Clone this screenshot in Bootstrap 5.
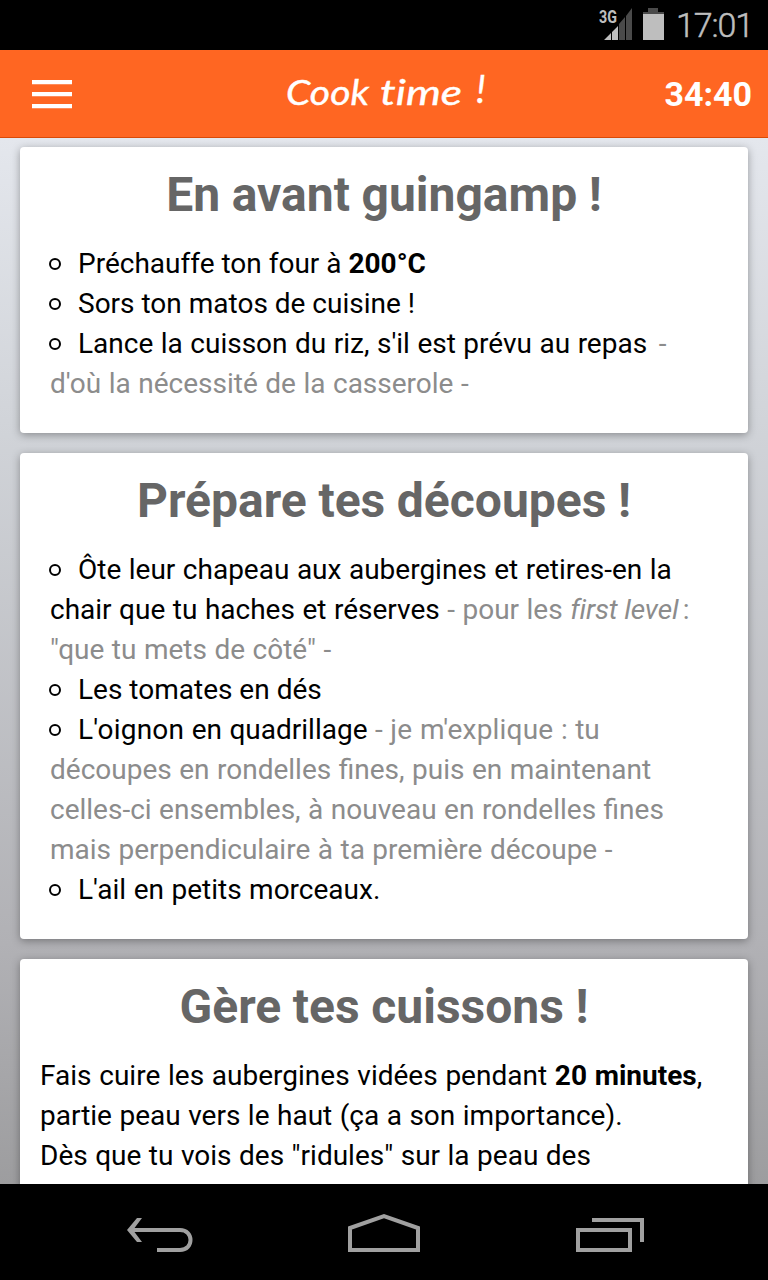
<!DOCTYPE html>
<html lang="fr">
<head>
<meta charset="utf-8">
<meta name="viewport" content="width=device-width, initial-scale=1">
<title>Cook time !</title>
<link href="https://cdn.jsdelivr.net/npm/bootstrap@5.3.0/dist/css/bootstrap.min.css" rel="stylesheet">
<style>
body{font-family:Roboto,"Liberation Sans",sans-serif;height:1280px;font-size:28px;line-height:40px;color:#000}
.statusbar{height:50px}
.topbar{height:88px;background:#ff6622;border-bottom:1px solid #d94a08}
.timer{font-size:34px;width:120px}
.burger{width:136px;padding-left:32px}
.wordmark{font-variant-ligatures:none}
.feed{background:linear-gradient(#e4e7ed 0,#d1d4d9 27%,#b1b1b5 77%,#9d9d9f 100%);padding:9px 20px 0;gap:20px;min-height:0}
.recipe{border-radius:4px;box-shadow:0 2px 8px rgba(0,0,0,.34);padding:0 20px 29px;white-space:nowrap;flex:none;word-spacing:.55px}
.recipe h2{font-size:48px;line-height:60px;font-weight:700;color:#666;margin:0;padding:18px 0 19px;word-spacing:-.3px}
.steps{padding:0 10px}
.steps li::before{content:"";display:inline-block;width:12px;height:12px;border:2px solid #000;border-radius:50%;margin:0 17px 3px -1px}
.steps .plain{word-spacing:0}
.hint{color:#8c8c8c}
.hint i{letter-spacing:-.15px;word-spacing:0}
.tight{word-spacing:-2.5px}
.loose{letter-spacing:.2px}
.wide-words{word-spacing:.8px}
.navkeys{height:96px}
</style>
</head>
<body class="d-flex flex-column overflow-hidden bg-black">
<div class="statusbar bg-black d-flex justify-content-end flex-shrink-0 pe-3">
  <svg width="70" height="50" viewBox="0 0 70 50" class="me-2">
    <text x="1" y="23" font-family="Roboto" font-size="18" font-weight="700" fill="#bebebe" textLength="18" lengthAdjust="spacingAndGlyphs">3G</text>
    <path fill="#bebebe" d="M6 40L13 33V40ZM14 32L20 26V40H14Z"/>
    <path fill="#4a4a4a" d="M21 24L27 17V40H21ZM28 16L34 8V40H28ZM50 8H60V12H66V14H45V12H50Z"/>
    <path fill="#bebebe" d="M45 14H66V40H45Z"/>
  </svg>
  <svg width="76" height="50" class="overflow-visible"><text x="0" y="37" font-family="Roboto" font-size="34" font-weight="300" fill="#bebebe" stroke="#bebebe" stroke-width=".5" textLength="78">17:01</text></svg>
</div>
<header class="topbar d-flex align-items-center justify-content-between text-white flex-shrink-0 pe-3">
  <div class="burger"><svg width="40" height="30" viewBox="0 0 40 30" class="d-block"><path fill="#ff8c59" d="M0 5H40V6H0ZM0 17H40V18H0ZM0 29H40V30H0Z"/><path fill="#fff" d="M0 1H40V5H0ZM0 13H40V17H0ZM0 25H40V29H0Z"/></svg></div>
  <svg class="wordmark" width="210" height="60" fill="#fff" stroke="#fff" stroke-width=".4" font-family="Lato" font-style="italic" font-weight="400">
    <text x="7" y="41" font-size="34" textLength="83" lengthAdjust="spacingAndGlyphs">Cook</text>
    <text x="101" y="41" font-size="34" textLength="82" lengthAdjust="spacingAndGlyphs">time</text>
    <text x="197" y="39" font-size="38">!</text>
  </svg>
  <div class="timer fw-bold text-end">34:40</div>
</header>
<main class="feed d-flex flex-column flex-fill overflow-hidden">
  <section class="recipe bg-white">
    <h2 class="text-center">En avant guingamp !</h2>
    <ul class="steps list-unstyled mb-0">
      <li class="plain">Préchauffe ton four à <b>200°C</b></li>
      <li class="plain">Sors ton matos de cuisine !</li>
      <li>Lance la cuisson du riz, s'il est prévu au repas <span class="hint"><span class="ms-1">-</span><br>d'où la nécessité de la casserole -</span></li>
    </ul>
  </section>
  <section class="recipe bg-white">
    <h2 class="text-center">Prépare tes découpes !</h2>
    <ul class="steps list-unstyled mb-0">
      <li>Ôte leur chapeau aux aubergines et retires-en la<br>chair que tu haches et réserves <span class="hint">- pour les <i>first level</i><span class="tight"> :</span><br>"que tu mets de côté" -</span></li>
      <li class="plain">Les tomates en dés</li>
      <li><span class="loose">L'oignon</span> en quadrillage <span class="hint">- <span class="loose">je m'explique</span> : tu<br>découpes en rondelles fines, puis en maintenant<br>celles-ci ensembles, à nouveau en rondelles fines<br>mais perpendiculaire à ta première découpe -</span></li>
      <li>L'ail en petits morceaux.</li>
    </ul>
  </section>
  <section class="recipe bg-white">
    <h2 class="text-center">Gère tes cuissons !</h2>
    <p class="mb-0"><span class="wide-words">Fais cuire les aubergines vidées pendant <b>20 minutes</b>,</span><br>partie peau vers le haut (ça a son importance).<br>Dès que tu vois des "ridules" sur la peau des</p>
  </section>
</main>
<nav class="navkeys bg-black flex-shrink-0 d-flex justify-content-between">
  <svg width="768" height="96" fill="none" stroke="#a0a0a0" stroke-width="4">
    <path d="M131 46H180C194 46 194 66 180 66H157"/>
    <path fill="#a0a0a0" stroke="none" d="M127 46L137 34H142L133 46L142 58H137Z"/>
    <path d="M350 66V44L384 32L418 44V66Z"/>
    <path d="M578 46H630V66H578ZM592 36H642V58"/>
  </svg>
</nav>
<script src="https://cdn.jsdelivr.net/npm/bootstrap@5.3.0/dist/js/bootstrap.bundle.min.js"></script>
</body>
</html>
